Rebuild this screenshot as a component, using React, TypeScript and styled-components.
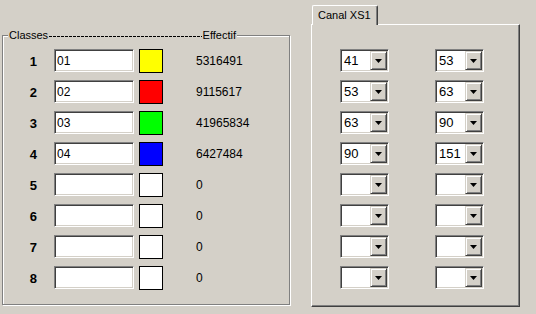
import React from "react";
import styled, { createGlobalStyle } from "styled-components";

interface Classe {
  id: number;
  code: string;
  color: string;
  effectif: string;
}

const classes: Classe[] = [
  { id: 1, code: "01", color: "#ffff00", effectif: "5316491" },
  { id: 2, code: "02", color: "#ff0000", effectif: "9115617" },
  { id: 3, code: "03", color: "#00ff00", effectif: "41965834" },
  { id: 4, code: "04", color: "#0000ff", effectif: "6427484" },
  { id: 5, code: "", color: "#ffffff", effectif: "0" },
  { id: 6, code: "", color: "#ffffff", effectif: "0" },
  { id: 7, code: "", color: "#ffffff", effectif: "0" },
  { id: 8, code: "", color: "#ffffff", effectif: "0" },
];

const seuils: [string, string][] = [
  ["41", "53"],
  ["53", "63"],
  ["63", "90"],
  ["90", "151"],
  ["", ""],
  ["", ""],
  ["", ""],
  ["", ""],
];

const GlobalStyle = createGlobalStyle`
  html, body {
    margin: 0;
    padding: 0;
    background: #d4d0c8;
  }
  body {
    font-family: "Liberation Sans", Arial, sans-serif;
    font-size: 11px;
    color: #000;
  }
`;

const Combo: React.FC<{ value: string }> = ({ value }) => (
  <ComboBox>
    <ComboText>{value}</ComboText>
    <ComboButton>
      <svg width="7" height="4" viewBox="0 0 7 4">
        <polygon points="0,0 7,0 3.5,4" fill="#000" />
      </svg>
    </ComboButton>
  </ComboBox>
);

const App: React.FC = () => {
  return (
    <>
      <GlobalStyle />
      <Page>
        <GroupBox>
          <Legend>
            <span>Classes</span>
            <Dashes />
            <span>Effectif</span>
          </Legend>
          <RowList>
            {classes.map((c) => (
              <Row key={c.id}>
                <RowNum>{c.id}</RowNum>
                <Field readOnly value={c.code} />
                <Swatch color={c.color} />
                <Effectif>{c.effectif}</Effectif>
              </Row>
            ))}
          </RowList>
        </GroupBox>

        <TabControl>
          <Tab>Canal XS1</Tab>
          <TabPage>
            {seuils.map(([a, b], i) => (
              <React.Fragment key={i}>
                <Combo value={a} />
                <Combo value={b} />
              </React.Fragment>
            ))}
          </TabPage>
        </TabControl>
      </Page>
    </>
  );
};

export default App;

// Styled components
const Page = styled.div`
  display: flex;
  align-items: flex-start;
  gap: 21px;
  padding-left: 2px;
`;

const GroupBox = styled.div`
  box-sizing: border-box;
  margin-top: 35px;
  width: 288px;
  height: 270px;
  border: 1px solid #808080;
  box-shadow: 1px 1px 0 #fff, inset 1px 1px 0 #fff;
`;

const Legend = styled.div`
  display: flex;
  align-items: center;
  box-sizing: border-box;
  width: 229px;
  height: 13px;
  margin: -7px 0 0 5px;
  padding: 0 1px;
  background: #d4d0c8;
  font-size: 11px;
  line-height: 13px;
`;

const Dashes = styled.span`
  flex: 1;
  height: 1px;
  margin: 1px 1px 0 1px;
  background: repeating-linear-gradient(
    90deg,
    #000 0 3px,
    transparent 3px 4px
  );
`;

const RowList = styled.div`
  display: flex;
  flex-direction: column;
  gap: 7px;
  margin-top: 7px;
`;

const Row = styled.div`
  display: flex;
  align-items: center;
  height: 24px;
`;

const RowNum = styled.span`
  width: 34px;
  text-align: right;
  font-size: 13px;
  font-weight: bold;
`;

const sunken = `
  box-sizing: border-box;
  border: 1px solid;
  border-color: #808080 #fff #fff #808080;
  box-shadow: inset 1px 1px 0 #404040, inset -1px -1px 0 #d4d0c8;
  background: #fff;
`;

const Field = styled.input`
  ${sunken}
  align-self: flex-start;
  width: 80px;
  height: 23px;
  margin: 0 0 0 17px;
  padding: 0 2px;
  font-family: "Liberation Sans", Arial, sans-serif;
  font-size: 12px;
  color: #000;
  outline: none;
`;

const Swatch = styled.span<{ color: string }>`
  box-sizing: border-box;
  width: 24px;
  height: 24px;
  margin-left: 5px;
  border: 1px solid #000;
  background: ${({ color }) => color};
`;

const Effectif = styled.span`
  margin-left: 33px;
  font-size: 12px;
`;

const TabControl = styled.div`
  display: flex;
  flex-direction: column;
  margin-top: 5px;
`;

const Tab = styled.div`
  position: relative;
  z-index: 1;
  box-sizing: border-box;
  width: 66px;
  height: 20px;
  margin: 0 0 -1px 1px;
  padding-left: 5px;
  border-top: 1px solid #fff;
  border-left: 1px solid #fff;
  border-right: 1px solid #404040;
  border-top-left-radius: 2px;
  border-top-right-radius: 2px;
  box-shadow: inset -1px 0 0 #808080;
  background: #d4d0c8;
  font-size: 11px;
  line-height: 18px;
`;

const TabPage = styled.div`
  box-sizing: border-box;
  width: 209px;
  height: 283px;
  padding: 24px 0 0 28px;
  border: 1px solid;
  border-color: #fff #404040 #404040 #fff;
  box-shadow: inset -1px -1px 0 #808080;
  display: grid;
  grid-template-columns: 49px 49px;
  column-gap: 46px;
  row-gap: 8px;
  align-content: start;
`;

const ComboBox = styled.div`
  ${sunken}
  display: flex;
  width: 49px;
  height: 23px;
  padding: 1px;
`;

const ComboText = styled.span`
  flex: 1;
  padding-left: 2px;
  font-size: 13px;
  line-height: 19px;
`;

const ComboButton = styled.span`
  box-sizing: border-box;
  display: flex;
  align-items: center;
  justify-content: center;
  width: 17px;
  height: 19px;
  border: 1px solid;
  border-color: #d4d0c8 #404040 #404040 #d4d0c8;
  box-shadow: inset 1px 1px 0 #fff, inset -1px -1px 0 #808080;
  background: #d4d0c8;
`;
